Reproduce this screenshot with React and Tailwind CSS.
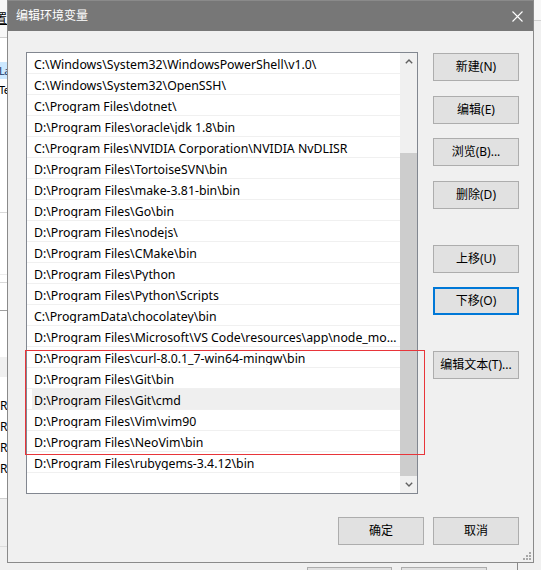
import React from "react";

const PATHS = [
  "C:\\Windows\\System32\\WindowsPowerShell\\v1.0\\",
  "C:\\Windows\\System32\\OpenSSH\\",
  "C:\\Program Files\\dotnet\\",
  "D:\\Program Files\\oracle\\jdk 1.8\\bin",
  "C:\\Program Files\\NVIDIA Corporation\\NVIDIA NvDLISR",
  "D:\\Program Files\\TortoiseSVN\\bin",
  "D:\\Program Files\\make-3.81-bin\\bin",
  "D:\\Program Files\\Go\\bin",
  "D:\\Program Files\\nodejs\\",
  "D:\\Program Files\\CMake\\bin",
  "D:\\Program Files\\Python",
  "D:\\Program Files\\Python\\Scripts",
  "C:\\ProgramData\\chocolatey\\bin",
  "D:\\Program Files\\Microsoft\\VS Code\\resources\\app\\node_modules\\.bin",
  "D:\\Program Files\\curl-8.0.1_7-win64-mingw\\bin",
  "D:\\Program Files\\Git\\bin",
  "D:\\Program Files\\Git\\cmd",
  "D:\\Program Files\\Vim\\vim90",
  "D:\\Program Files\\NeoVim\\bin",
  "D:\\Program Files\\rubygems-3.4.12\\bin",
];

const HOVERED = 16;

function Chevron({ up }) {
  return (
    <svg width="8" height="5" viewBox="0 0 8 5" className="block">
      <path
        d={up ? "M0.8 4.2 L4 1 L7.2 4.2" : "M0.8 0.8 L4 4 L7.2 0.8"}
        fill="none"
        stroke="#606060"
        strokeWidth="1.4"
      />
    </svg>
  );
}

function Btn({ children, focused, className = "" }) {
  return (
    <div
      className={
        "flex h-[28px] w-[86px] items-center justify-center bg-[#e1e1e1] text-[12px] text-black " +
        (focused ? "border-2 border-[#0078d7] " : "border border-[#adadad] ") +
        className
      }
    >
      {children}
    </div>
  );
}

function PathList() {
  return (
    <div className="relative">
      <div className="flex h-[442px] w-[392px] border border-[#828790] bg-white">
        <div className="flex-1 overflow-hidden">
          {PATHS.map((p, i) => (
            <div key={i} className="h-[21px] border-b border-[#f0f0f0]">
              <div
                className={
                  "flex h-full items-center " +
                  (i === HOVERED ? "ml-[5px] bg-[#efefef] pl-[2px]" : "pl-[7px]")
                }
              >
                <span className="block truncate pr-[3px] pt-[4px] text-[12.3px] leading-none text-black">
                  {p}
                </span>
              </div>
            </div>
          ))}
        </div>
        <div className="flex w-[17px] flex-col bg-[#f0f0f0]">
          <div className="flex h-[17px] items-center justify-center">
            <Chevron up />
          </div>
          <div className="flex flex-1 flex-col justify-end">
            <div className="h-[323px] bg-[#cdcdcd]" />
          </div>
          <div className="flex h-[17px] items-center justify-center">
            <Chevron />
          </div>
        </div>
      </div>
      {/* red outline around the newly added entries */}
      <div className="pointer-events-none absolute left-[-1px] top-[298px] h-[105px] w-[400px] border border-[#e8353a]" />
    </div>
  );
}

function Dialog() {
  return (
    <div className="absolute left-[7px] top-0 flex h-[563px] w-[527px] flex-col border border-[#8a8a8a] bg-[#f0f0f0]">
      <div className="flex h-[30px] items-center justify-between bg-[#777777] pl-[8px] pr-[10px]">
        <span className="text-[12px] text-white">编辑环境变量</span>
        <svg width="11" height="11" viewBox="0 0 11 11">
          <path d="M0.5 0.5 L10.5 10.5 M10.5 0.5 L0.5 10.5" stroke="#ffffff" strokeWidth="1.1" />
        </svg>
      </div>
      <div className="relative flex flex-1 flex-col pl-[18px] pr-[14px] pt-[21px]">
        <div className="flex">
          <PathList />
          <div className="ml-[15px] flex flex-col">
            <Btn className="mt-[1px]">新建(N)</Btn>
            <Btn className="mt-[15px]">编辑(E)</Btn>
            <Btn className="mt-[14px]">浏览(B)...</Btn>
            <Btn className="mt-[15px]">删除(D)</Btn>
            <Btn className="mt-[36px]">上移(U)</Btn>
            <Btn focused className="mt-[14px]">下移(O)</Btn>
            <Btn className="mt-[36px]">编辑文本(T)...</Btn>
          </div>
        </div>
        <div className="mt-[23px] flex justify-end gap-[9px]">
          <Btn>确定</Btn>
          <Btn>取消</Btn>
        </div>
        {/* size grip */}
        <svg className="absolute bottom-[2px] right-[2px]" width="8" height="8" viewBox="0 0 8 8">
          <g fill="#a8a8a8">
            <rect x="6" y="0" width="2" height="2" />
            <rect x="3" y="3" width="2" height="2" />
            <rect x="6" y="3" width="2" height="2" />
            <rect x="0" y="6" width="2" height="2" />
            <rect x="3" y="6" width="2" height="2" />
            <rect x="6" y="6" width="2" height="2" />
          </g>
        </svg>
      </div>
    </div>
  );
}

/* The System Properties window that sits behind the dialog; only its edges show. */
function BackWindow() {
  const cell = "h-[21px] shrink-0 flex items-center text-[12px] leading-none text-black";
  return (
    <div className="flex h-full w-full bg-[#f0f0f0]">
      {/* left edge */}
      <div className="flex w-[7px] flex-col overflow-hidden">
        <div className="flex h-[37px] shrink-0 items-center justify-end bg-[#f7f7f7]">
          <span className="shrink-0 text-[12px] leading-none text-black underline">设置</span>
        </div>
        <div className="flex h-[462px] shrink-0 flex-col border-y border-[#cfcfcf] bg-white">
          <div className="h-[24px] shrink-0" />
          <div className="flex h-[17px] shrink-0 items-center bg-[#cce8ff]">
            <span className="ml-[-1px] shrink-0 text-[11px] leading-none tracking-[-0.5px] text-[#1a3a6b]">Lang</span>
          </div>
          <div className="flex h-[21px] shrink-0 items-center">
            <span className="ml-[-1px] shrink-0 text-[11px] leading-none tracking-[-0.5px] text-black">Temp</span>
          </div>
          <div className="h-[113px] shrink-0 border-b border-[#d9d9d9]" />
          <div className="h-[62px] shrink-0 border-b border-[#ececec]" />
          <div className="h-[8px] shrink-0 border-b border-[#d9d9d9]" />
          <div className="h-[28px] shrink-0 border-b border-[#a0a0a0]" />
          <div className="h-[46px] shrink-0" />
          <div className="h-[20px] shrink-0 bg-[#f0f0f0]" />
          <div className="h-[18px] shrink-0" />
          <div className={cell}>R</div>
          <div className={cell}>R</div>
          <div className={cell}>R</div>
          <div className={cell}>R</div>
        </div>
        <div className="h-[48px] shrink-0 border-b border-[#dcdcdc]" />
      </div>
      {/* bottom edge, under the dialog */}
      <div className="flex flex-1 flex-col">
        <div className="flex-1" />
        <div className="flex h-[7px] items-start">
          <div className="ml-[300px] mt-[4px] h-[10px] w-[85px] border border-[#adadad] bg-[#e1e1e1]" />
          <div className="ml-[9px] mt-[4px] h-[10px] w-[86px] border border-[#adadad] bg-[#e1e1e1]" />
          <div className="ml-[30px] h-full w-px bg-[#8a8a8a]" />
        </div>
      </div>
      {/* right edge */}
      <div className="flex w-[7px] flex-col">
        <div className="h-[21px] border-b border-[#d0d0d0] bg-[#f7f7f7]" />
      </div>
    </div>
  );
}

export default function App() {
  return (
    <div className="relative h-[570px] w-[541px] overflow-hidden font-[family-name:'Noto_Sans','Noto_Sans_CJK_SC',sans-serif]">
      <BackWindow />
      <Dialog />
    </div>
  );
}
